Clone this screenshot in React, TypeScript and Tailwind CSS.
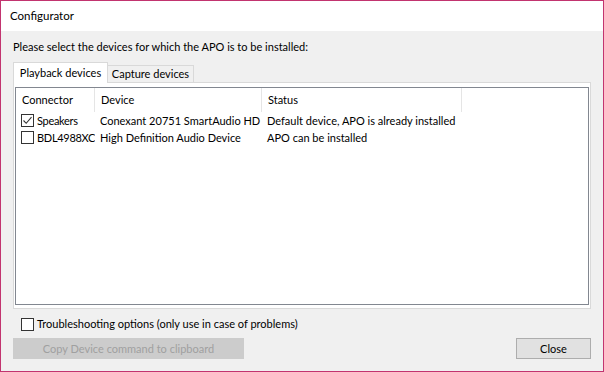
import React from "react";

const font = { fontFamily: 'Lato, "Segoe UI", sans-serif' };

function Check({ checked }: { checked?: boolean }) {
  return (
    <span className="inline-flex h-[13px] w-[13px] shrink-0 items-center justify-center border border-[#333333] bg-white">
      {checked && (
        <svg width="11" height="11" viewBox="0 0 11 11">
          <path d="M1.5 5.5 L4.2 8.3 L9.5 2.2" fill="none" stroke="#333333" strokeWidth="1.1" />
        </svg>
      )}
    </span>
  );
}

const rows = [
  { checked: true, connector: "Speakers", device: "Conexant 20751 SmartAudio HD", status: "Default device, APO is already installed" },
  { checked: false, connector: "BDL4988XC", device: "High Definition Audio Device", status: "APO can be installed" },
];

export default function App() {
  return (
    <div
      className="flex h-[372px] w-[604px] flex-col border border-[#c2346f] bg-[#f0f0f0] text-[11px] leading-[16px] text-black"
      style={font}
    >
      {/* Title bar */}
      <div className="flex h-[30px] shrink-0 items-center bg-white pl-[9px] text-[11.5px]">Configurator</div>

      <div className="flex flex-1 flex-col px-[12px] pb-[12px]">
        <div className="mt-[8px] whitespace-nowrap">Please select the devices for which the APO is to be installed:</div>

        {/* Tabs */}
        <div className="mt-[6px] flex h-[21px] items-end whitespace-nowrap">
          <div className="z-10 -mb-px flex h-[21px] w-[95px] items-center justify-center border border-b-0 border-[#d9d9d9] bg-white">
            Playback devices
          </div>
          <div className="flex h-[17px] w-[86px] items-center justify-center border border-b-0 border-l-0 border-[#d9d9d9] bg-[#f0f0f0]">
            Capture devices
          </div>
        </div>

        {/* Tab page */}
        <div className="flex h-[227px] flex-col border border-[#d9d9d9] bg-white px-[1px] pb-[3px] pt-[4px]">
          <div className="flex flex-1 flex-col border border-[#828790] bg-white">
            <div className="flex h-[24px] items-center">
              <div className="flex h-full w-[79px] items-center border-r border-[#e5e5e5] pl-[6px]">Connector</div>
              <div className="flex h-full w-[167px] items-center border-r border-[#e5e5e5] pl-[6px]">Device</div>
              <div className="flex h-full w-[200px] items-center border-r border-[#e5e5e5] pl-[6px]">Status</div>
            </div>
            {rows.map((r) => (
              <div key={r.connector} className="flex h-[17px] items-center whitespace-nowrap">
                <div className="flex w-[79px] items-center gap-[3px] overflow-hidden pl-[5px] tracking-[-0.3px]">
                  <Check checked={r.checked} />
                  <span>{r.connector}</span>
                </div>
                <div className="w-[167px] pl-[5px]">{r.device}</div>
                <div className="w-[200px] pl-[5px]">{r.status}</div>
              </div>
            ))}
          </div>
        </div>

        <div className="mt-[7px] flex items-center gap-[3px] pl-[8px]">
          <Check />
          <span>Troubleshooting options (only use in case of problems)</span>
        </div>

        <div className="mt-auto flex items-center justify-between">
          <div className="flex h-[21px] w-[231px] items-center justify-center bg-[#cccccc] text-[#a0a0a0]">
            Copy Device command to clipboard
          </div>
          <div className="flex h-[21px] w-[75px] items-center justify-center border border-[#adadad] bg-[#e1e1e1]">
            Close
          </div>
        </div>
      </div>
    </div>
  );
}
